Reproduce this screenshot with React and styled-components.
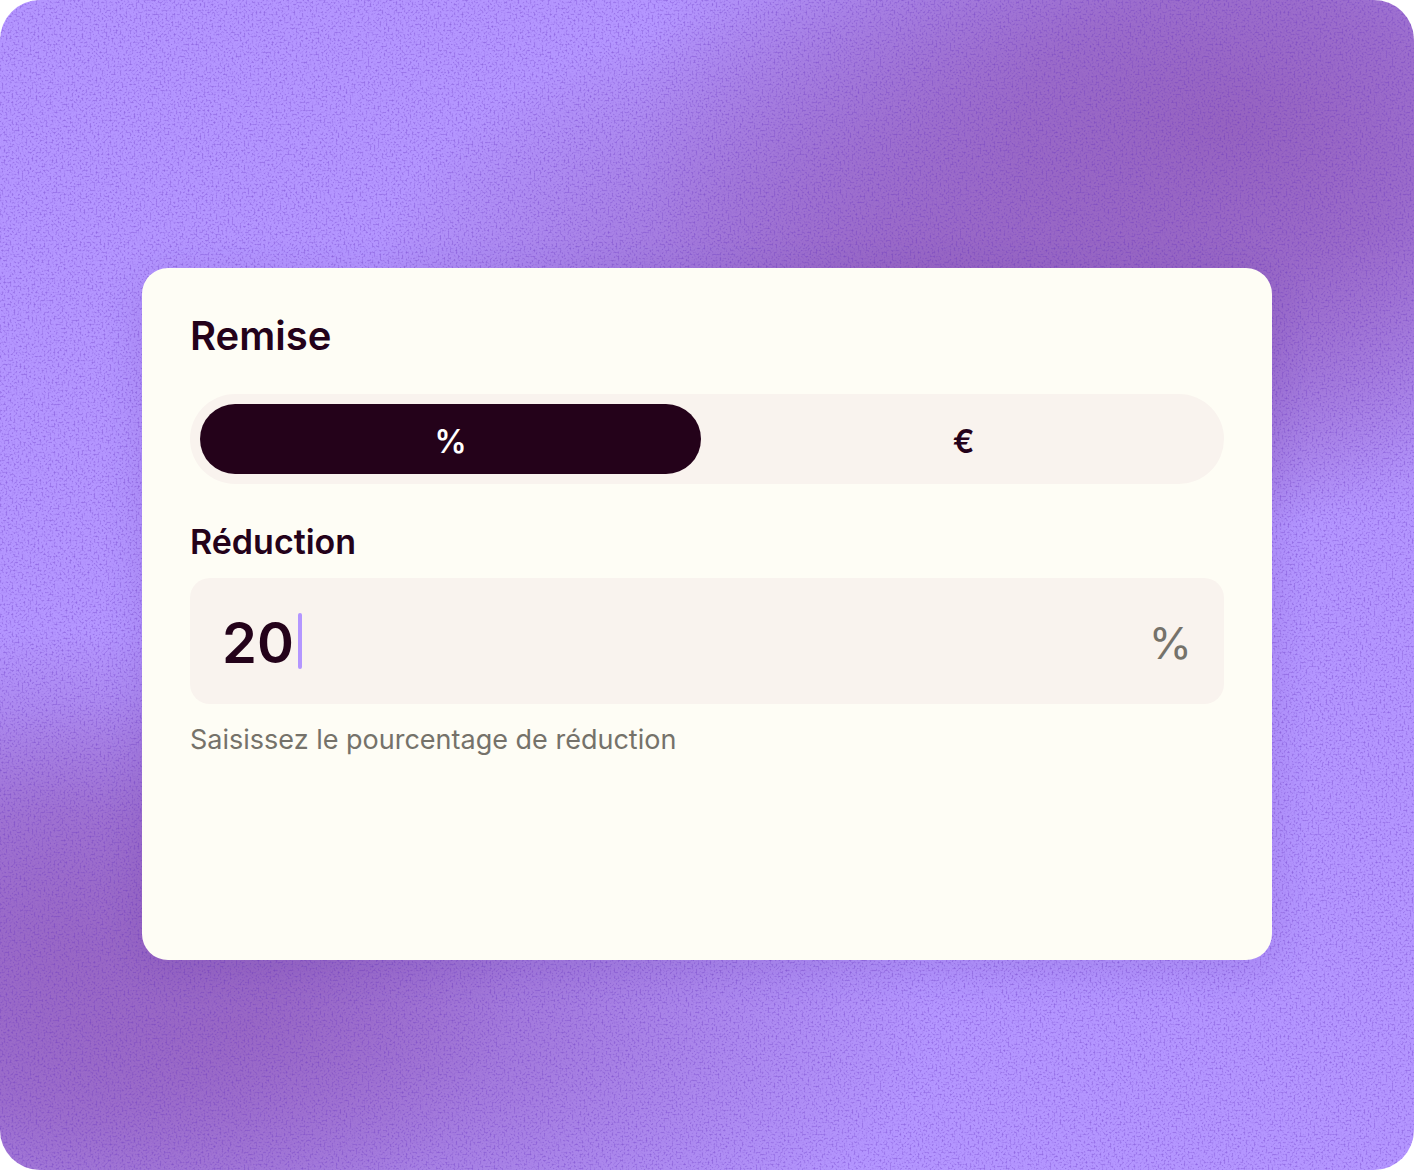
import React, { useState } from "react";
import styled, { createGlobalStyle } from "styled-components";

const GlobalStyle = createGlobalStyle`
  *, *::before, *::after { box-sizing: border-box; }
  body {
    margin: 0;
    background: #ffffff;
    font-family: Inter, "Liberation Sans", sans-serif;
    color: #24021a;
    -webkit-font-smoothing: antialiased;
  }
`;

const Stage = styled.main`
  position: relative;
  display: flex;
  min-height: 100vh;
  padding: 268px 142px 210px;
  border-radius: 40px;
  overflow: hidden;
  background:
    radial-gradient(ellipse 42% 34% at 87% 11%, #9663c0 0%, #9663c0cc 35%, #9663c000 100%),
    radial-gradient(ellipse 40% 26% at 66% 25%, #9663c0e6 0%, #9663c080 50%, #9663c000 100%),
    radial-gradient(ellipse 32% 28% at 5% 82%, #9663c0cc 0%, #9663c099 45%, #9663c000 100%),
    radial-gradient(ellipse 48% 28% at 18% 87%, #9663c0cc 0%, #9663c080 45%, #9663c000 100%),
    #b496ff;
`;

const Grain = styled.svg`
  position: absolute;
  inset: 0;
  width: 100%;
  height: 100%;
`;

const Card = styled.section`
  position: relative;
  flex: 1;
  display: flex;
  flex-direction: column;
  padding: 48px;
  border-radius: 26px;
  background: #fefdf5;
  box-shadow: 0 8px 40px rgba(60, 20, 120, 0.12);
`;

const Title = styled.h1`
  margin: 0 0 38px;
  font-size: 40px;
  line-height: 40px;
  font-weight: 600;
`;

const Segments = styled.div`
  display: grid;
  grid-template-columns: 1fr 1fr;
  gap: 12px;
  padding: 10px;
  border-radius: 45px;
  background: #f9f3ee;
`;

const Segment = styled.button`
  height: 70px;
  padding: 4px 0 0;
  border: 0;
  border-radius: 35px;
  font: inherit;
  font-size: 32px;
  font-weight: 600;
  cursor: pointer;
  background: ${(p) => (p.$active ? "#24021a" : "transparent")};
  color: ${(p) => (p.$active ? "#ffffff" : "#24021a")};
`;

const Label = styled.label`
  margin: 38px 0 16px;
  font-size: 34px;
  line-height: 40px;
  font-weight: 600;
`;

const Field = styled.div`
  display: flex;
  align-items: center;
  height: 126px;
  padding: 0 32px;
  border-radius: 20px;
  background: #f9f3ee;
`;

const Amount = styled.input`
  field-sizing: content;
  min-width: 0;
  padding: 4px 0 0;
  border: 0;
  outline: 0;
  background: transparent;
  font: inherit;
  font-size: 56px;
  line-height: 72px;
  font-weight: 600;
  color: inherit;
  caret-color: transparent;
`;

const Caret = styled.span`
  width: 4px;
  height: 56px;
  margin-left: 4px;
  border-radius: 2px;
  background: #b496ff;
`;

const Unit = styled.span`
  margin-left: auto;
  padding-top: 4px;
  font-size: 44px;
  line-height: 48px;
  color: #75726a;
`;

const Hint = styled.p`
  margin: 16px 0 0;
  font-size: 27px;
  line-height: 40px;
  color: #75726a;
`;

const units = ["%", "€"];

export default function App() {
  const [unit, setUnit] = useState("%");
  const [amount, setAmount] = useState("20");

  return (
    <>
      <GlobalStyle />
      <Stage>
        <Grain aria-hidden="true">
          <filter id="grain" x="0" y="0" width="100%" height="100%" colorInterpolationFilters="sRGB">
            <feTurbulence type="fractalNoise" baseFrequency="0.5" numOctaves="2" seed="4" />
            <feColorMatrix values="0 0 0 0 0.38  0 0 0 0 0.18  0 0 0 0 0.74  3 0 0 0 -1.45" />
          </filter>
          <rect width="100%" height="100%" filter="url(#grain)" opacity="0.42" />
        </Grain>
        <Card>
          <Title>Remise</Title>
          <Segments role="group" aria-label="Remise">
            {units.map((u) => (
              <Segment key={u} type="button" $active={u === unit} aria-pressed={u === unit} onClick={() => setUnit(u)}>
                {u}
              </Segment>
            ))}
          </Segments>
          <Label htmlFor="amount">Réduction</Label>
          <Field>
            <Amount
              id="amount"
              inputMode="decimal"
              aria-describedby="hint"
              value={amount}
              onChange={(e) => setAmount(e.target.value)}
            />
            <Caret />
            <Unit>{unit}</Unit>
          </Field>
          <Hint id="hint">Saisissez le pourcentage de réduction</Hint>
        </Card>
      </Stage>
    </>
  );
}
